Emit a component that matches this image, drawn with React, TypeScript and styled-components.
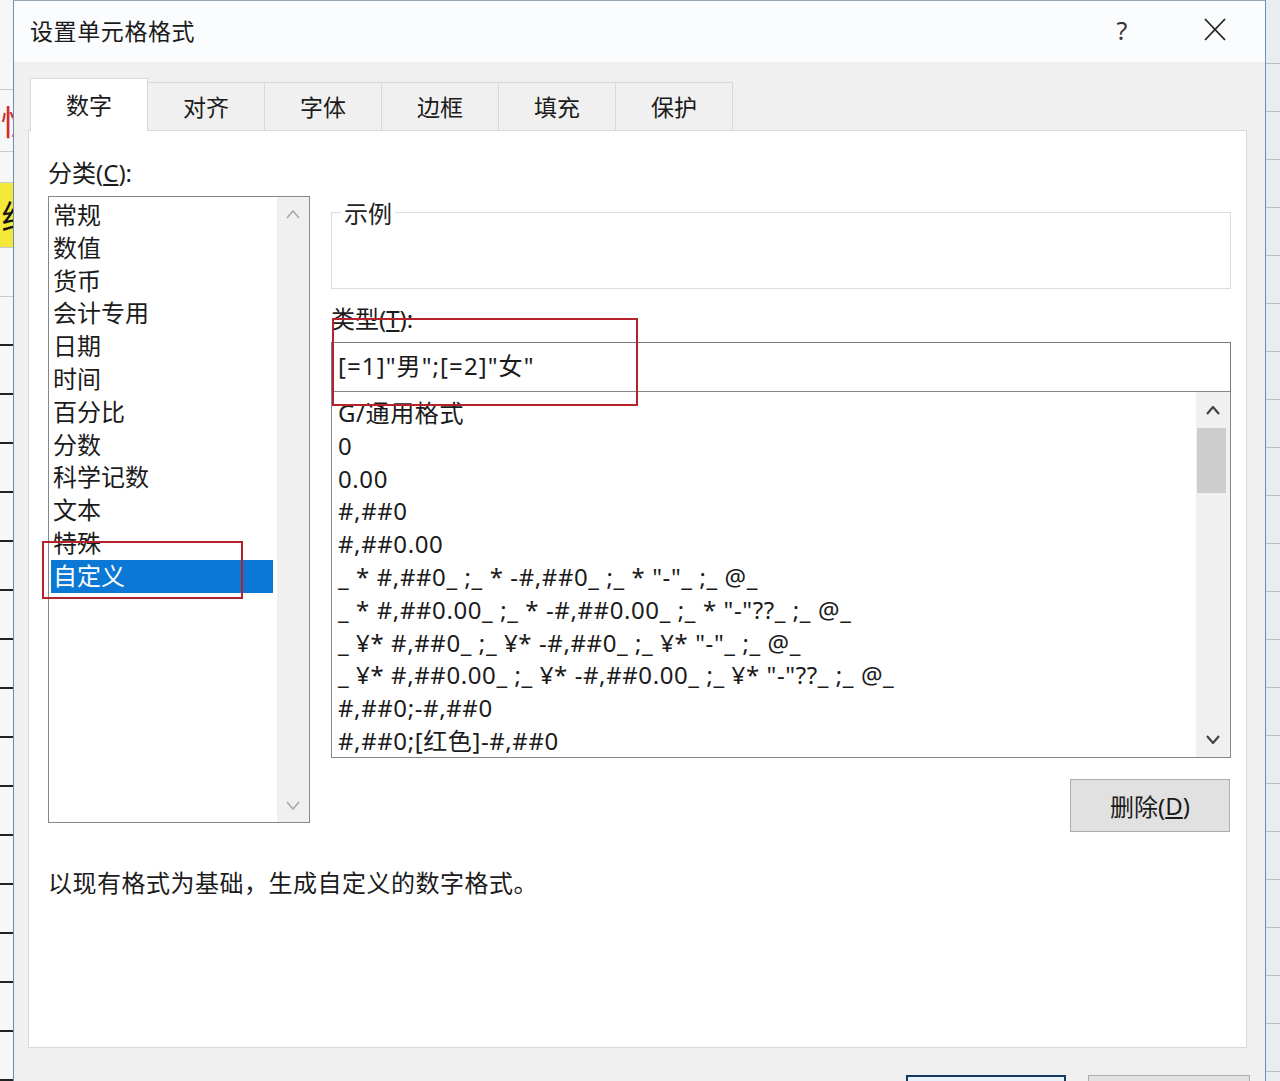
import React from "react";
import styled, { createGlobalStyle } from "styled-components";

const Global = createGlobalStyle`
  html, body { margin: 0; padding: 0; background: #fff; }
  body {
    font-family: "Noto Sans", "Noto Sans CJK SC", sans-serif;
    color: #1b1b1b;
    overflow: hidden;
  }
  #root { width: 1280px; height: 1081px; }
`;

const Screen = styled.div`
  position: relative;
  width: 1280px;
  height: 1081px;
  overflow: hidden;
  display: flex;
`;

const SheetLeft = styled.div`
  flex: 0 0 13px;
  display: flex;
  flex-direction: column;
  background: #f6f7f9;
  overflow: hidden;
`;

const SheetCell = styled.div<{ $h: number; $bg?: string; $color?: string }>`
  flex: 0 0 ${(p) => p.$h}px;
  background: ${(p) => p.$bg || "transparent"};
  color: ${(p) => p.$color || "#111"};
  display: flex;
  align-items: center;
  justify-content: flex-end;
  overflow: hidden;
  font-family: "Noto Sans CJK SC", sans-serif;
  font-size: 34px;
  white-space: nowrap;
  border-bottom: 1px solid #c8ccd2;
  box-sizing: border-box;
`;

const SheetText = styled.span`
  margin-right: -22px;
`;

const SheetRows = styled.div`
  flex: 1;
  background: repeating-linear-gradient(
    to bottom,
    #f6f7f9 0px,
    #f6f7f9 47px,
    #222 47px,
    #222 49px
  );
`;

const SheetRight = styled.div`
  flex: 0 0 14px;
  background: repeating-linear-gradient(
      to bottom,
      #e9ecf0 0px,
      #e9ecf0 47px,
      #b9bec5 47px,
      #b9bec5 48px
    );
  background-position: 0 16px;
`;

const Dialog = styled.div`
  flex: 1;
  display: flex;
  flex-direction: column;
  background: #f0f0f0;
  border-left: 1px solid #6f8db3;
  border-right: 1px solid #6f8db3;
  border-top: 1px solid #9aa6b2;
  box-sizing: border-box;
`;

const TitleBar = styled.div`
  flex: 0 0 61px;
  display: flex;
  align-items: center;
  padding-left: 16px;
  background: #fbfcfe;
  font-family: "Noto Sans CJK SC", sans-serif;
  font-size: 23px;
  color: #1a1a1a;
`;

const TitleText = styled.div`
  flex: 1;
  letter-spacing: 0.6px;
  padding-bottom: 4px;
`;

const TitleButton = styled.div<{ $w: number }>`
  width: ${(p) => p.$w}px;
  height: 61px;
  display: flex;
  align-items: center;
  justify-content: center;
  font-family: "Noto Sans", sans-serif;
  font-size: 25px;
  color: #333;
  padding-bottom: 4px;
  box-sizing: border-box;
`;

const TitleButtons = styled.div`
  display: flex;
  gap: 33px;
  padding-right: 20px;
`;

const Body = styled.div`
  flex: 1;
  display: flex;
  flex-direction: column;
  padding: 16px 18px 0 14px;
  min-height: 0;
`;

const TabRow = styled.div`
  display: flex;
  align-items: flex-end;
  height: 53px;
  margin: 0 0 -1px 2px;
  position: relative;
  z-index: 1;
`;

const Tab = styled.div<{ $active?: boolean }>`
  box-sizing: border-box;
  width: 118px;
  height: ${(p) => (p.$active ? 53 : 49)}px;
  margin-left: -1px;
  &:first-child { margin-left: 0; }
  border: 1px solid #d9d9d9;
  border-bottom: ${(p) => (p.$active ? "none" : "1px solid #d9d9d9")};
  background: ${(p) => (p.$active ? "#fff" : "#f0f0f0")};
  display: flex;
  align-items: center;
  justify-content: center;
  font-family: "Noto Sans CJK SC", sans-serif;
  font-size: 23px;
  color: #1b1b1b;
  padding-bottom: ${(p) => (p.$active ? 3 : 1)}px;
`;

const Panel = styled.div`
  flex: 1;
  background: #fff;
  border: 1px solid #d9d9d9;
  padding: 25px 0 0 19px;
  display: flex;
  flex-direction: column;
`;

const Columns = styled.div`
  display: grid;
  grid-template-columns: 262px 900px;
  column-gap: 21px;
  align-items: start;
`;

const Column = styled.div`
  display: flex;
  flex-direction: column;
`;

const Label = styled.div`
  font-size: 24px;
  line-height: 33px;
  height: 33px;
  color: #1b1b1b;
  white-space: nowrap;
`;

const ListBox = styled.div<{ $h: number }>`
  box-sizing: border-box;
  height: ${(p) => p.$h}px;
  border: 1px solid #828790;
  display: flex;
  background: #fff;
`;

const CatListBox = styled(ListBox)`
  margin-top: 7px;
`;

const ItemsCol = styled.div<{ $padLeft: number; $padTop: number }>`
  flex: 1;
  display: flex;
  flex-direction: column;
  padding-top: ${(p) => p.$padTop}px;
  padding-left: ${(p) => p.$padLeft}px;
  overflow: hidden;
`;

const CatItem = styled.div<{ $selected?: boolean }>`
  height: 32.8px;
  line-height: 32.8px;
  margin-right: 4px;
  padding-left: 2px;
  font-size: 24px;
  color: ${(p) => (p.$selected ? "#fff" : "#1b1b1b")};
  background: ${(p) => (p.$selected ? "#0a78d4" : "transparent")};
  white-space: nowrap;
`;

const FmtItem = styled.div`
  height: 32.8px;
  line-height: 32.8px;
  font-size: 24px;
  letter-spacing: 0.6px;
  color: #1b1b1b;
  white-space: pre;
`;

const ScrollTrack = styled.div<{ $w: number }>`
  flex: 0 0 ${(p) => p.$w}px;
  background: #f0f0f0;
  display: flex;
  flex-direction: column;
`;

const ScrollArrow = styled.div<{ $h: number }>`
  flex: 0 0 ${(p) => p.$h}px;
  display: flex;
  align-items: center;
  justify-content: center;
`;

const ScrollSpace = styled.div`
  flex: 1;
`;

const Thumb = styled.div`
  flex: 0 0 65px;
  margin: 0 4px 0 1px;
  background: #cdcdcd;
`;

const Group = styled.fieldset`
  margin: 40px 0 0;
  padding: 0;
  border: 1px solid #dcdcdc;
  min-width: 0;
`;

const GroupLegend = styled.legend`
  margin-left: 9px;
  padding: 0 3px;
  font-size: 24px;
  line-height: 33px;
  color: #222;
  font-family: "Noto Sans CJK SC", sans-serif;
`;

const GroupBody = styled.div`
  height: 59px;
`;

const TypeLabel = styled(Label)`
  margin-top: 13px;
`;

const TypeInput = styled.div`
  box-sizing: border-box;
  height: 50px;
  margin-top: 7px;
  border: 1px solid #7a7a7a;
  padding: 0 0 5px 6px;
  display: flex;
  align-items: center;
  font-size: 24px;
  letter-spacing: 1.1px;
  color: #1b1b1b;
  white-space: pre;
  background: #fff;
`;

const FmtListBox = styled(ListBox)`
  margin-top: -1px;
`;

const ButtonRow = styled.div`
  display: flex;
  justify-content: flex-end;
  margin-top: 21px;
  padding-right: 1px;
`;

const PushButton = styled.div<{ $w: number; $default?: boolean }>`
  box-sizing: border-box;
  width: ${(p) => p.$w}px;
  height: 53px;
  flex: 0 0 auto;
  background: ${(p) => (p.$default ? "#e5f1fb" : "#e1e1e1")};
  border: ${(p) => (p.$default ? "2px solid #123a5e" : "1px solid #adadad")};
  display: flex;
  align-items: center;
  justify-content: center;
  font-size: 24px;
  color: #1b1b1b;
`;

const Description = styled.div`
  margin-top: 34px;
  font-size: 24px;
  line-height: 33px;
  letter-spacing: 0.5px;
  color: #1b1b1b;
  white-space: nowrap;
`;

const Footer = styled.div`
  flex: 0 0 33px;
  display: flex;
  justify-content: flex-end;
  align-items: flex-start;
  gap: 22px;
  padding-top: 27px;
  margin-right: -3px;
  overflow: hidden;
  box-sizing: border-box;
`;

const Annotation = styled.div<{ $x: number; $y: number; $w: number; $h: number }>`
  position: absolute;
  left: ${(p) => p.$x}px;
  top: ${(p) => p.$y}px;
  width: ${(p) => p.$w}px;
  height: ${(p) => p.$h}px;
  box-sizing: border-box;
  border: 2px solid #b4232c;
  pointer-events: none;
`;

const Chevron = ({ up, color, w = 14, sw = 2 }: { up?: boolean; color: string; w?: number; sw?: number }) => (
  <svg width={w} height={w / 2 + 2} viewBox={`0 0 ${w} ${w / 2 + 2}`}>
    <polyline
      points={
        up
          ? `1,${w / 2 + 1} ${w / 2},1 ${w - 1},${w / 2 + 1}`
          : `1,1 ${w / 2},${w / 2 + 1} ${w - 1},1`
      }
      fill="none"
      stroke={color}
      strokeWidth={sw}
    />
  </svg>
);

const CloseIcon = () => (
  <svg width="22" height="23" viewBox="0 0 22 23">
    <line x1="1" y1="1" x2="21" y2="22" stroke="#222" strokeWidth="1.8" />
    <line x1="21" y1="1" x2="1" y2="22" stroke="#222" strokeWidth="1.8" />
  </svg>
);

const categories = [
  "常规",
  "数值",
  "货币",
  "会计专用",
  "日期",
  "时间",
  "百分比",
  "分数",
  "科学记数",
  "文本",
  "特殊",
  "自定义",
];

const formats = [
  "G/通用格式",
  "0",
  "0.00",
  "#,##0",
  "#,##0.00",
  '_ * #,##0_ ;_ * -#,##0_ ;_ * "-"_ ;_ @_',
  '_ * #,##0.00_ ;_ * -#,##0.00_ ;_ * "-"??_ ;_ @_',
  '_ ¥* #,##0_ ;_ ¥* -#,##0_ ;_ ¥* "-"_ ;_ @_',
  '_ ¥* #,##0.00_ ;_ ¥* -#,##0.00_ ;_ ¥* "-"??_ ;_ @_',
  "#,##0;-#,##0",
  "#,##0;[红色]-#,##0",
];

const tabs = ["数字", "对齐", "字体", "边框", "填充", "保护"];

export default function App() {
  return (
    <>
      <Global />
      <Screen>
        <SheetLeft>
          <SheetCell $h={90} />
          <SheetCell $h={62} $color="#d42a2a">
            <SheetText>性</SheetText>
          </SheetCell>
          <SheetCell $h={31} />
          <SheetCell $h={65} $bg="#f4e93a">
            <SheetText>线</SheetText>
          </SheetCell>
          <SheetCell $h={49} />
          <SheetRows />
        </SheetLeft>
        <Dialog>
          <TitleBar>
            <TitleText>设置单元格格式</TitleText>
            <TitleButtons>
              <TitleButton $w={60}>?</TitleButton>
              <TitleButton $w={60}>
                <CloseIcon />
              </TitleButton>
            </TitleButtons>
          </TitleBar>
          <Body>
            <TabRow>
              {tabs.map((t, i) => (
                <Tab key={t} $active={i === 0}>
                  {t}
                </Tab>
              ))}
            </TabRow>
            <Panel>
              <Columns>
                <Column>
                  <Label>
                    分类(<u>C</u>):
                  </Label>
                  <CatListBox $h={627}>
                    <ItemsCol $padLeft={2} $padTop={2}>
                      {categories.map((c) => (
                        <CatItem key={c} $selected={c === "自定义"}>
                          {c}
                        </CatItem>
                      ))}
                    </ItemsCol>
                    <ScrollTrack $w={32}>
                      <ScrollArrow $h={34}>
                        <Chevron up color="#a8a8a8" w={14} sw={1.6} />
                      </ScrollArrow>
                      <ScrollSpace />
                      <ScrollArrow $h={34}>
                        <Chevron color="#a8a8a8" w={14} sw={1.6} />
                      </ScrollArrow>
                    </ScrollTrack>
                  </CatListBox>
                </Column>
                <Column>
                  <Group>
                    <GroupLegend>示例</GroupLegend>
                    <GroupBody />
                  </Group>
                  <TypeLabel>
                    类型(<u>T</u>):
                  </TypeLabel>
                  <TypeInput>[=1]"男";[=2]"女"</TypeInput>
                  <FmtListBox $h={367}>
                    <ItemsCol $padLeft={6} $padTop={5}>
                      {formats.map((f) => (
                        <FmtItem key={f}>{f}</FmtItem>
                      ))}
                    </ItemsCol>
                    <ScrollTrack $w={34}>
                      <ScrollArrow $h={36}>
                        <Chevron up color="#444" w={14} sw={2.2} />
                      </ScrollArrow>
                      <Thumb />
                      <ScrollSpace />
                      <ScrollArrow $h={36}>
                        <Chevron color="#444" w={14} sw={2.2} />
                      </ScrollArrow>
                    </ScrollTrack>
                  </FmtListBox>
                  <ButtonRow>
                    <PushButton $w={160}>
                      删除(<u>D</u>)
                    </PushButton>
                  </ButtonRow>
                </Column>
              </Columns>
              <Description>以现有格式为基础，生成自定义的数字格式。</Description>
            </Panel>
            <Footer>
              <PushButton $w={160} $default aria-label="确定" />
              <PushButton $w={162} aria-label="取消" />
            </Footer>
          </Body>
        </Dialog>
        <SheetRight />
        <Annotation $x={42} $y={541} $w={201} $h={58} />
        <Annotation $x={332} $y={318} $w={306} $h={88} />
      </Screen>
    </>
  );
}
